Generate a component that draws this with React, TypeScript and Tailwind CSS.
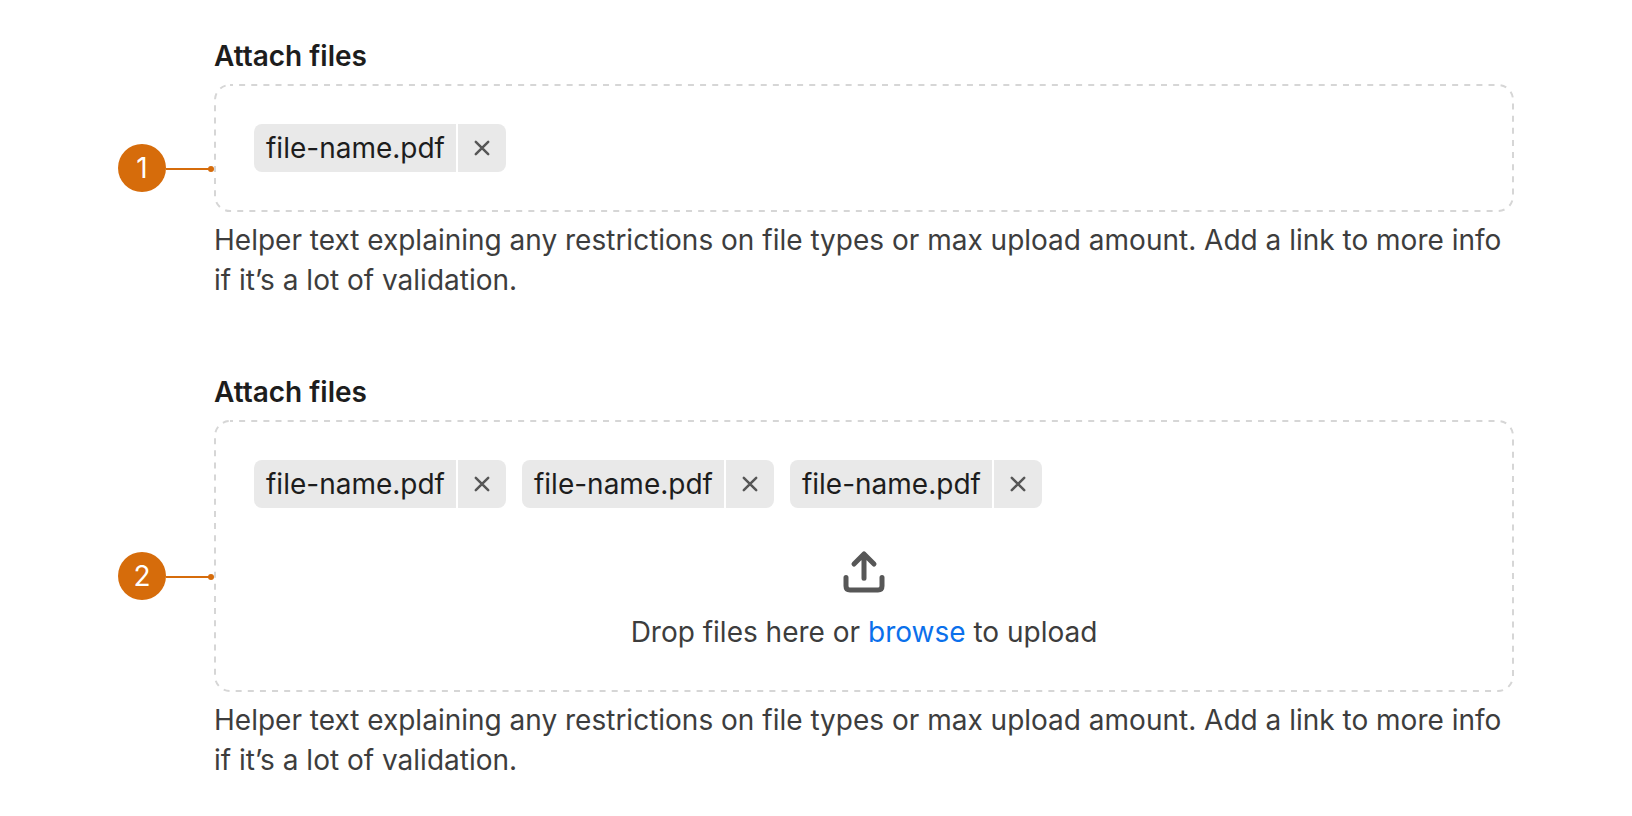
import { useId, useRef, useState } from "react";

interface FileTagProps {
  name: string;
  onRemove: () => void;
}

function FileTag({ name, onRemove }: FileTagProps) {
  return (
    <li className="flex h-12 gap-0.5 overflow-hidden rounded-lg">
      <span className="flex items-center bg-[#e9e9e9] pr-[11px] pl-3 text-[#1d1d1d]">
        {name}
      </span>
      <button
        type="button"
        aria-label={`Remove ${name}`}
        onClick={onRemove}
        className="flex w-12 items-center justify-center bg-[#e9e9e9] text-[#575757]"
      >
        <svg
          viewBox="0 0 16 16"
          className="size-4"
          fill="none"
          stroke="currentColor"
          strokeWidth="2.5"
          strokeLinecap="round"
        >
          <path d="M1.8 1.8 14.2 14.2M14.2 1.8 1.8 14.2" />
        </svg>
      </button>
    </li>
  );
}

function UploadIcon() {
  return (
    <svg
      viewBox="0 0 48 48"
      className="size-12 text-[#575757]"
      fill="none"
      stroke="currentColor"
      strokeWidth="5"
      strokeLinecap="round"
      strokeLinejoin="round"
    >
      <path d="M24 6v24.2M14 16 24 6l10 10" />
      <path d="M6 29.6V38q0 4 4 4h28q4 0 4-4v-8.4" />
    </svg>
  );
}

// CSS dashed borders space their dashes too tightly, so the outline is drawn
function DashedOutline() {
  return (
    <svg
      aria-hidden="true"
      className="pointer-events-none absolute inset-0 size-full"
    >
      <rect
        x="1"
        y="1"
        rx="15"
        className="h-[calc(100%-2px)] w-[calc(100%-2px)]"
        fill="none"
        stroke="#d6d6d6"
        strokeWidth="2"
        strokeDasharray="6 6.13"
        strokeDashoffset="3"
      />
    </svg>
  );
}

interface FileFieldProps {
  marker: number;
  initialFiles: string[];
  showPrompt?: boolean;
}

function FileField({ marker, initialFiles, showPrompt }: FileFieldProps) {
  const id = useId();
  const inputRef = useRef<HTMLInputElement>(null);
  const [files, setFiles] = useState(initialFiles);

  return (
    <section className="flex items-center">
      <div className="flex shrink-0 items-center">
        <span className="flex size-12 items-center justify-center rounded-full bg-[#d66c0b] text-white">
          {marker}
        </span>
        <svg viewBox="0 0 48 8" className="h-2 w-12 text-[#d66c0b]">
          <path d="M0 5h45" stroke="currentColor" strokeWidth="2" />
          <circle cx="45" cy="5" r="3" fill="currentColor" />
        </svg>
      </div>

      <div className="min-w-0 flex-1">
        <label htmlFor={id} className="mb-2 block font-semibold text-[#1d1d1d]">
          Attach files
        </label>
        <div className="relative rounded-2xl p-10">
          <DashedOutline />
          <input
            ref={inputRef}
            id={id}
            type="file"
            multiple
            className="sr-only"
            onChange={(e) =>
              setFiles([
                ...files,
                ...Array.from(e.target.files ?? []).map((f) => f.name),
              ])
            }
          />
          <ul className="flex flex-wrap gap-4">
            {files.map((name, i) => (
              <FileTag
                key={i}
                name={name}
                onRemove={() => setFiles(files.filter((_, n) => n !== i))}
              />
            ))}
          </ul>
          {showPrompt && (
            <div className="mt-10 flex flex-col items-center gap-4">
              <UploadIcon />
              <p className="text-[#3d3d3d]">
                Drop files here or{" "}
                <button
                  type="button"
                  className="text-[#0b70eb]"
                  onClick={() => inputRef.current?.click()}
                >
                  browse
                </button>{" "}
                to upload
              </p>
            </div>
          )}
        </div>
        <p className="mt-2 text-[#3d3d3d]">
          Helper text explaining any restrictions on file types or max upload
          amount. Add a link to more info if it’s a lot of validation.
        </p>
      </div>
    </section>
  );
}

export default function App() {
  return (
    <main className="flex min-h-screen flex-col gap-[72px] bg-white px-[118px] py-9 font-['Inter',sans-serif] text-[28px] leading-10">
      <FileField marker={1} initialFiles={["file-name.pdf"]} />
      <FileField
        marker={2}
        initialFiles={["file-name.pdf", "file-name.pdf", "file-name.pdf"]}
        showPrompt
      />
    </main>
  );
}
